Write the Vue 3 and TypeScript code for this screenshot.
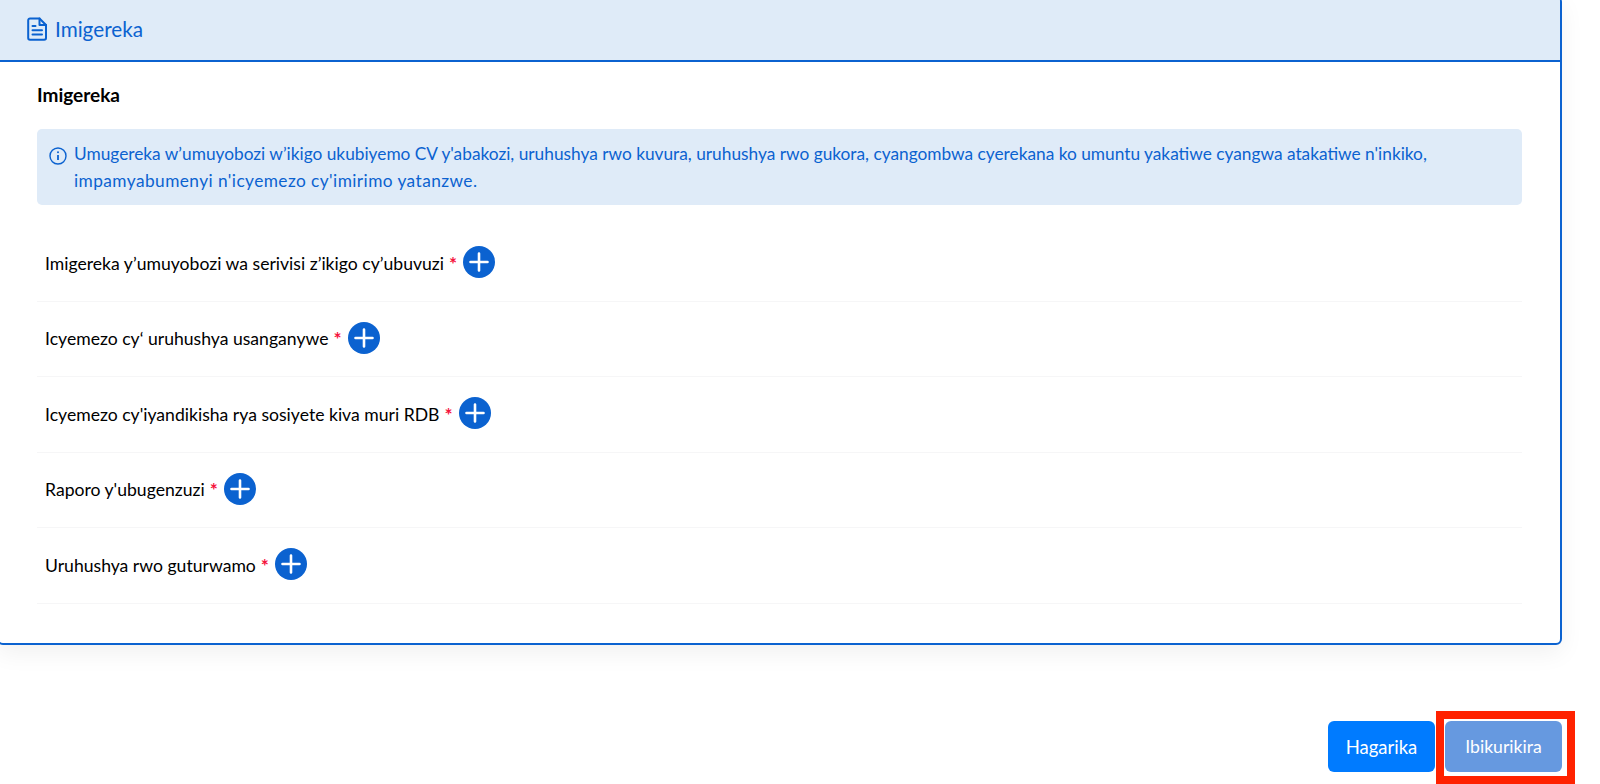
<template>
  <div class="page">
    <section class="card">
      <header class="card-head">
        <svg class="doc-icon" viewBox="0 0 20 24" fill="none" stroke="currentColor" stroke-width="2" stroke-linejoin="round" stroke-linecap="round">
          <path d="M3 1.500h9.500L19 8v13a1.800 1.800 0 0 1-1.800 1.800H3A1.800 1.800 0 0 1 1.200 21V3.300A1.800 1.800 0 0 1 3 1.500z" />
          <path d="M12.500 1.500V8H19" />
          <path d="M5.500 9h3M5.500 13.200h9.500M5.500 17.400h9.500" />
        </svg>
        <span>Imigereka</span>
      </header>

      <div class="card-body">
        <h3 class="title">Imigereka</h3>

        <div class="alert">
          <svg class="info-icon" viewBox="0 0 18 18" fill="none" stroke="currentColor" stroke-width="1.400">
            <circle cx="9" cy="9" r="8" />
            <path d="M9 8v5" stroke-width="1.800" />
            <circle cx="9" cy="5.300" r="1" fill="currentColor" stroke="none" />
          </svg>
          <p>
            Umugereka w’umuyobozi w’ikigo ukubiyemo CV y'abakozi, uruhushya rwo kuvura, uruhushya rwo gukora, cyangombwa cyerekana ko umuntu yakatiwe cyangwa atakatiwe n'inkiko,<br /><span class="alert-end">impamyabumenyi n'icyemezo cy'imirimo yatanzwe.</span>
          </p>
        </div>

        <ul class="docs">
          <li v-for="doc in documents" :key="doc" class="doc-row">
            <span class="doc-name">{{ doc }}</span>
            <span class="required">*</span>
            <button class="add-btn" type="button" aria-label="Add">
              <svg viewBox="0 0 20 20" stroke="#fff" stroke-width="2.600" stroke-linecap="round">
                <path d="M10 1.500v17M1.500 10h17" />
              </svg>
            </button>
          </li>
        </ul>
      </div>
    </section>

    <footer class="actions">
      <button class="btn btn-cancel" type="button">Hagarika</button>
      <div class="highlight">
        <button class="btn btn-next" type="button">Ibikurikira</button>
      </div>
    </footer>
  </div>
</template>

<script setup lang="ts">
const documents: string[] = [
  'Imigereka y’umuyobozi wa serivisi z’ikigo cy’ubuvuzi',
  'Icyemezo cy‘ uruhushya usanganywe',
  "Icyemezo cy'iyandikisha rya sosiyete kiva muri RDB",
  "Raporo y'ubugenzuzi",
  'Uruhushya rwo guturwamo'
];
</script>

<style>
html,
body {
  background: #fff;
  overflow: hidden;
}
</style>

<style scoped>
.page {
  width: 1600px;
  height: 784px;
  overflow: hidden;
  font-family: Lato, "Open Sans", sans-serif;
  color: #000;
}

.card {
  box-sizing: border-box;
  width: 1565px;
  height: 649px;
  margin: -4px 0 0 -3px;
  background: #fff;
  border: 2px solid #0b62d0;
  border-radius: 6px;
  box-shadow: 0 8px 24px rgba(0, 0, 0, 0.06);
  overflow: hidden;
}

.card-head {
  display: flex;
  align-items: center;
  gap: 8px;
  height: 64px;
  box-sizing: border-box;
  padding: 0 0 0 28px;
  background: #dfebf8;
  border-bottom: 2px solid #0b62d0;
  color: #0b62d0;
  font-size: 20.700px;
}

.doc-icon {
  width: 20px;
  height: 24px;
}

.card-body {
  padding: 21px 38px 0 38px;
}

.title {
  margin: 0;
  font-size: 19px;
  line-height: 24px;
  font-weight: 700;
}

.alert {
  display: flex;
  gap: 7px;
  margin-top: 22px;
  padding: 11px 12px 10px 12px;
  height: 76px;
  box-sizing: border-box;
  background: #dfebf8;
  border-radius: 5px;
  color: #0b62d0;
  font-size: 17.300px;
  line-height: 27px;
}

.alert p {
  margin: 0;
}

.alert-end {
  letter-spacing: 0.430px;
}

.info-icon {
  flex: none;
  width: 18px;
  height: 18px;
  margin-top: 7px;
}

.docs {
  list-style: none;
  margin: 21px 0 0;
  padding: 0;
}

.doc-row {
  display: flex;
  align-items: center;
  box-sizing: border-box;
  height: 75.500px;
  padding: 0 8px;
  border-bottom: 1px solid #f6f6f7;
  font-size: 17.600px;
}

.required {
  margin-left: 5px;
  color: #f5123c;
  font-size: 19px;
  font-weight: 700;
}

.add-btn {
  display: flex;
  align-items: center;
  justify-content: center;
  width: 32px;
  height: 32px;
  margin: -2px 0 0 6px;
  padding: 0;
  border: 0;
  border-radius: 50%;
  background: #0b62d0;
}

.add-btn svg {
  width: 20px;
  height: 20px;
}

.actions {
  display: flex;
  justify-content: flex-end;
  align-items: flex-start;
  margin-top: 66px;
  padding-right: 25px;
}

.btn {
  height: 51px;
  border: 0;
  border-radius: 6px;
  color: #fff;
  font-family: inherit;
  font-size: 17.600px;
}

.btn-cancel {
  width: 107px;
  margin: 10px 1px 0 0;
  background: #007bff;
  font-size: 18.500px;
}

.highlight {
  display: flex;
  align-items: flex-start;
  box-sizing: border-box;
  width: 139px;
  height: 73px;
  border: 8px solid #ff2200;
}

.btn-next {
  width: 117px;
  margin: 2px 0 0 1px;
  background: #6699e0;
}
</style>
